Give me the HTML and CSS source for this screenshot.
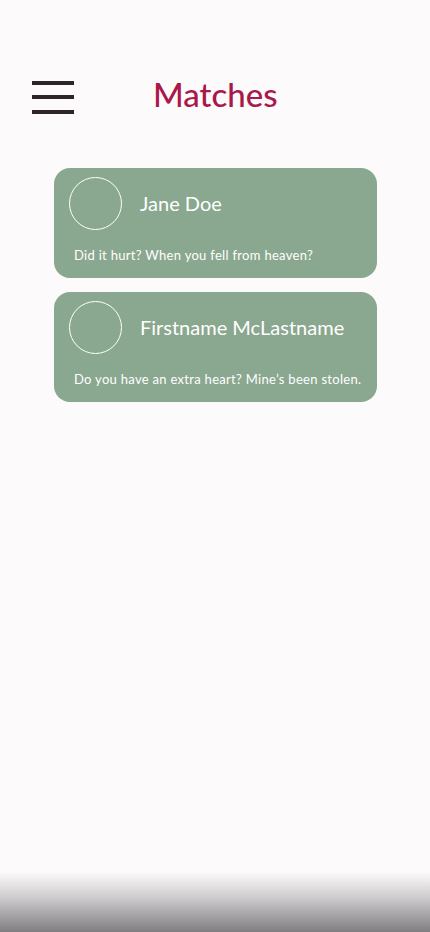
FILE: index.html
```html
<!DOCTYPE html>
<html lang="en">
<head>
<meta charset="utf-8">
<title>Matches</title>
<link rel="stylesheet" href="styles.css">
</head>
<body>
<div class="screen">
  <header class="topbar">
    <button class="menu" aria-label="Menu">
      <span class="bar"></span><span class="bar"></span><span class="bar"></span>
    </button>
    <h1 class="title">Matches</h1>
  </header>
  <main class="list">
    <article class="card">
      <div class="card-head">
        <div class="avatar"></div>
        <div class="name">Jane Doe</div>
      </div>
      <p class="line">Did it hurt? When you fell from heaven?</p>
    </article>
    <article class="card">
      <div class="card-head">
        <div class="avatar"></div>
        <div class="name">Firstname McLastname</div>
      </div>
      <p class="line">Do you have an extra heart? Mine’s been stolen.</p>
    </article>
  </main>
  <div class="shade"></div>
</div>
</body>
</html>
```
FILE: styles.css
```css
* { box-sizing: border-box; }
html, body { margin: 0; padding: 0; }
body {
  background: #fdfafc;
  font-family: "Lato", "Open Sans", sans-serif;
}
.screen {
  position: relative;
  width: 430px;
  height: 932px;
  overflow: hidden;
}
.topbar {
  display: flex;
  align-items: center;
  padding: 80px 0 0 32px;
  height: 114px;
}
.menu {
  display: flex;
  flex-direction: column;
  gap: 10.5px;
  width: 42px;
  padding: 0;
  margin: 0;
  border: 0;
  background: none;
}
.bar {
  display: block;
  height: 4px;
  width: 42px;
  background: #2d2527;
}
.title {
  margin: -7px 0 0 79px;
  font-size: 33px;
  font-weight: 500;
  color: #a8194a;
  letter-spacing: 0;
  line-height: 34px;
}
.list {
  display: flex;
  flex-direction: column;
  gap: 14px;
  padding: 54px 53px 0 54px;
}
.card {
  height: 110px;
  background: #8aa78f;
  border-radius: 16px;
  padding: 9px 14px 0 15px;
  color: #fff;
}
.card-head {
  display: flex;
  align-items: center;
  gap: 18px;
}
.avatar {
  width: 53px;
  height: 53px;
  border: 1px solid #fff;
  border-radius: 50%;
  flex: none;
}
.name {
  font-size: 20px;
  letter-spacing: 0;
  margin-top: -2px;
}
.line {
  margin: 17px 0 0 5px;
  font-size: 13px;
  letter-spacing: 0.3px;
}
.shade {
  position: absolute;
  left: 0;
  right: 0;
  bottom: 0;
  height: 60px;
  background: linear-gradient(to bottom, rgba(128,126,128,0) 0%, rgba(128,126,128,0.35) 40%, #807e80 100%);
}
```
